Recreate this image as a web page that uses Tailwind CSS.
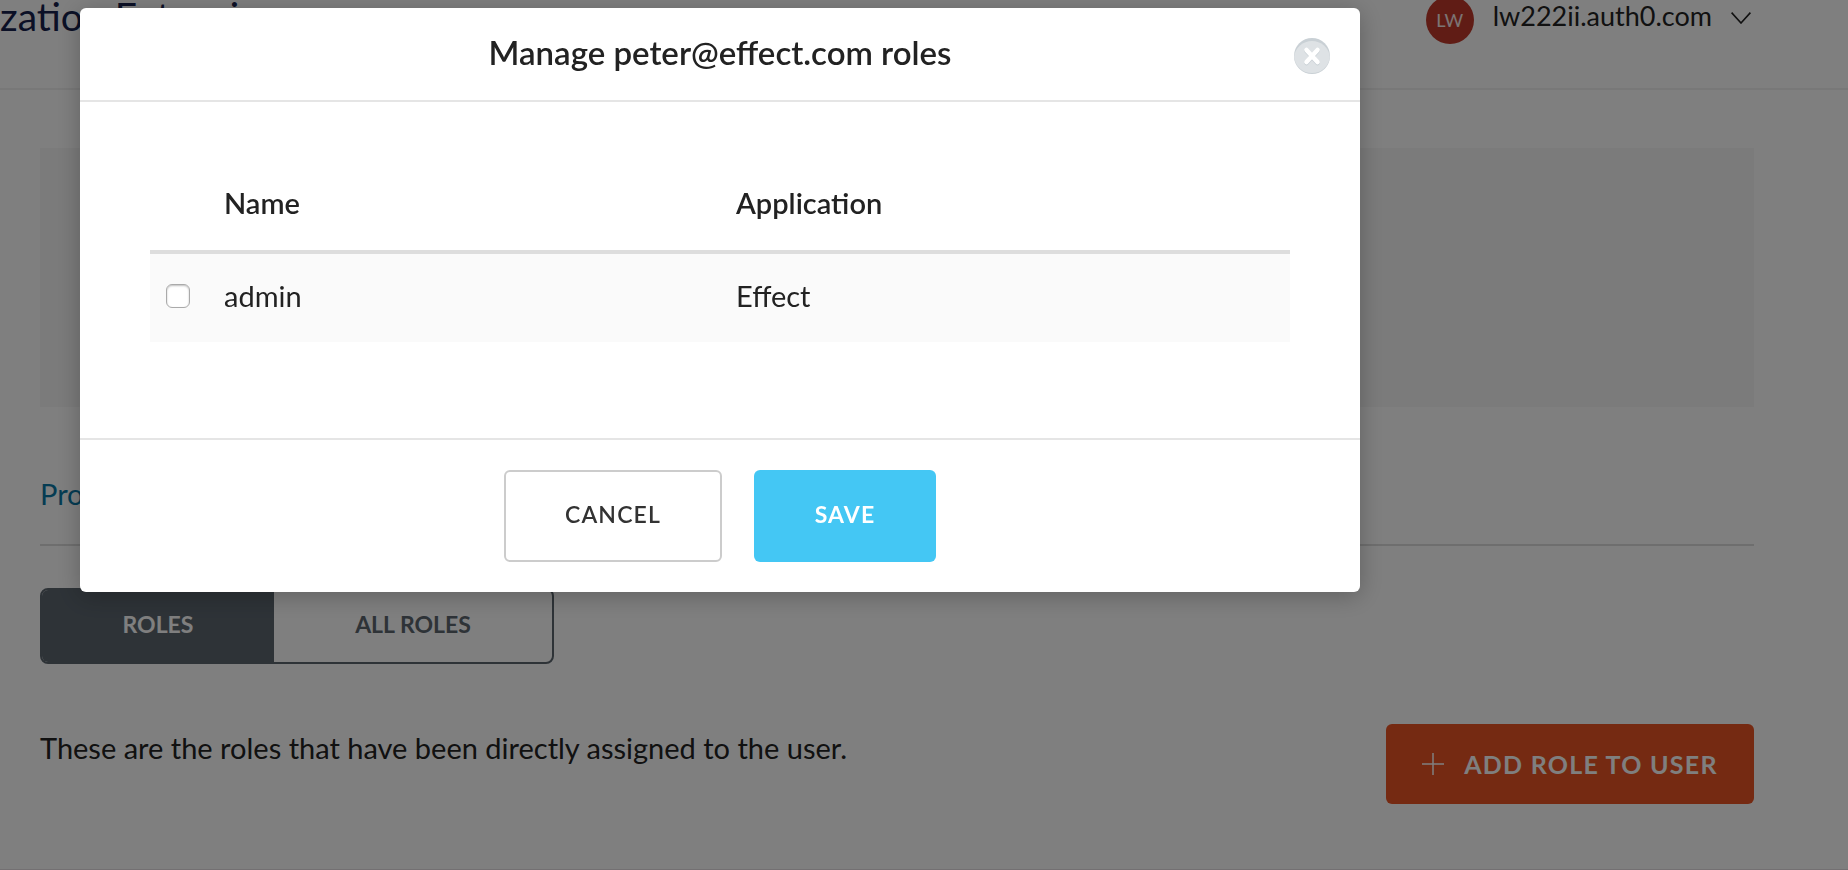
<!DOCTYPE html>
<html lang="en">
<head>
<meta charset="utf-8">
<title>Authorization Extension</title>
<script src="https://cdn.jsdelivr.net/npm/@tailwindcss/browser@4"></script>
</head>
<body class="min-h-screen bg-white font-[Lato,sans-serif] text-[29px] leading-10 text-[#222222]">
<div class="flex min-h-screen flex-col border-b border-[#e6e0e4]">
  <header class="flex h-[90px] items-start justify-between border-b-2 border-[#f1f1f1] pr-[97px]">
    <h1 class="-mt-2 whitespace-nowrap text-[39px] leading-12 text-[#16214d]">zation Extension</h1>
    <button type="button" class="-mt-1 flex items-start gap-[19px]">
      <span class="flex size-12 items-center justify-center rounded-full bg-[#c0392b] text-lg text-white/90">LW</span>
      <span class="text-[27px]">lw222ii.auth0.com</span>
      <svg class="mt-4 h-3 w-5" viewBox="0 0 20 12" fill="none" stroke="currentColor" stroke-width="1.6" aria-hidden="true"><path d="M.6.6 10 11 19.4.6"/></svg>
    </button>
  </header>
  <main class="pt-[58px] pr-[94px] pl-10">
    <section class="h-[259px] bg-[#f7f7f7]"></section>
    <nav class="mt-[67px] flex h-[72px] border-b-2 border-[#dddddd]">
      <a href="#profile" class="text-[#0a78a6]">Profile</a>
    </nav>
    <div class="mt-[42px] flex h-[76px] w-[514px] overflow-hidden rounded-lg border-2 border-[#5c666f] text-[23px] font-bold text-[#5c666f]">
      <button type="button" class="w-[232px] bg-[#5c666f] pb-1 text-white">ROLES</button>
      <button type="button" class="flex-1 pb-1">ALL ROLES</button>
    </div>
    <div class="mt-15 flex items-start justify-between">
      <p class="pt-1">These are the roles that have been directly assigned to the user.</p>
      <button type="button" class="flex h-20 w-[368px] items-center justify-center gap-5 rounded-md bg-[#eb5424] text-[25px] font-bold tracking-wider text-white">
        <svg class="size-[22px]" viewBox="0 0 22 22" stroke="currentColor" stroke-width="1.5" aria-hidden="true"><path d="M11 0v22M0 11h22"/></svg>
        ADD ROLE TO USER
      </button>
    </div>
  </main>
</div>

<div class="fixed inset-0 bg-black/50 pt-2 pl-20">
  <div role="dialog" aria-modal="true" aria-labelledby="dialog-title" class="w-[1280px] rounded-md bg-white shadow-[0_4px_24px_rgba(0,0,0,0.25)]">
    <div class="relative flex h-[94px] justify-center border-b-2 border-[#e5e5e5] pt-6">
      <h2 id="dialog-title" class="text-[33px] font-semibold">Manage peter@effect.com roles</h2>
      <button type="button" aria-label="Close" class="absolute top-[30px] right-[30px]">
        <svg class="size-9" viewBox="0 0 36 36" aria-hidden="true"><circle cx="18" cy="18" r="18" fill="#c9d0d5"/><path d="M.1 19a18 18 0 0 1 35.8 0A18 18 0 0 1 .1 19Z" fill="#dee2e5"/><path d="m12.5 13 11 12m0-12-11 12" stroke="#c9d0d5" stroke-width="4.5" stroke-linecap="round"/><path d="m12.5 12 11 12m0-12-11 12" stroke="#fff" stroke-width="4.5" stroke-linecap="round"/></svg>
      </button>
    </div>
    <div class="px-[70px] pt-[58px] pb-24">
      <table class="w-full table-fixed border-collapse text-left">
        <thead>
          <tr class="h-[92px] border-b-4 border-[#dddddd]">
            <th class="w-[74px]"></th>
            <th class="w-[512px] pb-1 font-semibold">Name</th>
            <th class="pb-1 font-semibold">Application</th>
          </tr>
        </thead>
        <tbody>
          <tr class="h-[90px] bg-[#fafafa]">
            <td class="pb-1 pl-4"><input type="checkbox" aria-labelledby="role-admin" class="block size-6 appearance-none rounded-md border border-[#aaaaaa] bg-white shadow-[inset_0_1px_2px_rgba(0,0,0,0.25)]"></td>
            <td id="role-admin" class="pb-1">admin</td>
            <td class="pb-1">Effect</td>
          </tr>
        </tbody>
      </table>
    </div>
    <div class="flex justify-center gap-8 border-t-2 border-[#e5e5e5] py-[30px] text-[23px] tracking-wider">
      <button type="button" class="h-[92px] w-[218px] rounded-md border-2 border-[#cccccc] pb-1 font-semibold text-[#333333]">CANCEL</button>
      <button type="button" class="h-[92px] w-[182px] rounded-md bg-[#44c7f4] pb-1 font-bold text-white">SAVE</button>
    </div>
  </div>
</div>
</body>
</html>
